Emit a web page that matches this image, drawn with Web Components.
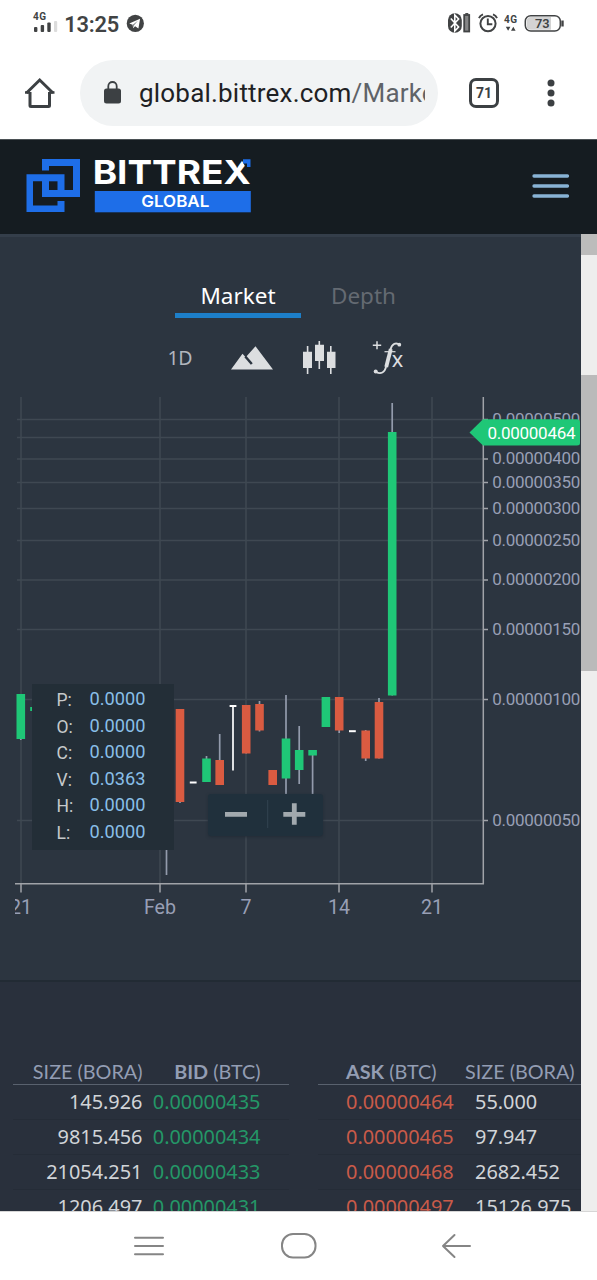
<!DOCTYPE html>
<html lang="en">
<head>
<meta charset="utf-8">
<title>Bittrex Global</title>
<style>
body {
    margin: 0;
    width: 597px;
    height: 1280px;
    overflow: hidden;
    display: flex;
    flex-direction: column;
    background: #fff;
    font-family: Roboto, "Liberation Sans", sans-serif;
}
</style>
</head>
<body>
<status-bar time="13:25" battery="73"></status-bar>
<browser-bar tabs="71"><span>global.bittrex.com</span><span slot="path">/Markets</span></browser-bar>
<site-header></site-header>
<scroll-view>
    <market-panel>
        <chart-tab active>Market</chart-tab>
        <chart-tab>Depth</chart-tab>
        <chart-tools slot="tools"></chart-tools>
        <price-chart slot="chart"></price-chart>
    </market-panel>
    <order-books>
        <order-table side="bid"></order-table>
        <order-table side="ask"></order-table>
    </order-books>
</scroll-view>
<system-nav></system-nav>

<script>
function define(name, html, setup) {
    const template = document.createElement('template');
    template.innerHTML = html;
    customElements.define(name, class extends HTMLElement {
        constructor() {
            super();
            this.attachShadow({mode: 'open'}).appendChild(template.content.cloneNode(true));
        }
        connectedCallback() {
            if (setup) setup(this, this.shadowRoot);
        }
    });
}

define('status-bar', `
<style>
:host {
    display: flex;
    justify-content: space-between;
    height: 46px;
    flex: none;
    color: #414344;
}
svg { display: block; }
text { font-family: Roboto, sans-serif; fill: #414344; }
</style>
<svg width="160" height="46">
    <text x="33" y="20" font-size="10" font-weight="700" textLength="13">4G</text>
    <g fill="#414344">
        <rect x="34" y="27" width="3.4" height="5" rx="1"/>
        <rect x="40.7" y="25" width="3.4" height="7" rx="1"/>
        <rect x="47.3" y="22.5" width="3.4" height="9.5" rx="1"/>
    </g>
    <rect x="54" y="21" width="3.2" height="11" rx="1" fill="#dcdcdc"/>
    <text id="time" x="64.3" y="31.6" font-size="21.8" font-weight="600" textLength="55"></text>
    <circle cx="135.3" cy="23.4" r="8.6" fill="#414344"/>
    <path d="M129.3 23.6l10.8-4.8-1.7 9.6-3.3-2.2-1.9 2-.6-3.5z" fill="#fff"/>
    <path d="M132.7 24.7l5.2-3.9-4 4.7-.7 2.6z" fill="#85898c"/>
</svg>
<svg width="160" height="46" viewBox="437 0 160 46">
    <rect x="448" y="13.3" width="13.8" height="19.5" rx="6.8" fill="#414344"/>
    <path d="M450.8 18.5l7.8 8.5-3.8 4V15l3.8 4-7.8 8.5" fill="none" stroke="#fff" stroke-width="1.6"/>
    <rect x="464.2" y="15" width="5" height="16.5" fill="#858687" stroke="#414344" stroke-width="1.8"/>
    <path d="M465.3 13.8h3" stroke="#414344" stroke-width="1.5"/>
    <circle cx="488" cy="23.6" r="7.6" fill="none" stroke="#414344" stroke-width="2"/>
    <path d="M487.8 18.5v5.7h4.5M479 18.2q1-2.7 4-3.8M497 18.2q-1-2.7-4-3.8" fill="none" stroke="#414344" stroke-width="1.9"/>
    <text x="504" y="23.3" font-size="10" font-weight="700" textLength="13">4G</text>
    <path d="M505.8 26.8h4.6l-2.3 4zM511 30.8h4.6l-2.3-4z" fill="#414344"/>
    <rect x="525.3" y="15.7" width="35" height="15.4" rx="5.5" fill="#fff" stroke="#414344" stroke-width="1.5"/>
    <path d="M531 17h20v12.8h-20q-4.3 0-4.3-4.3v-4.2q0-4.3 4.3-4.3z" fill="#d3d3d3"/>
    <path d="M562.5 20.5v6" stroke="#414344" stroke-width="2.4"/>
    <text id="battery" x="535" y="28" font-size="12.8" font-weight="600" textLength="14.5"></text>
</svg>
`, (el, root) => {
    root.querySelector('#time').textContent = el.getAttribute('time');
    root.querySelector('#battery').textContent = el.getAttribute('battery');
});

define('browser-bar', `
<style>
:host {
    display: flex;
    align-items: center;
    height: 93px;
    flex: none;
    color: #3c4043;
}
.home { margin-left: 24px; }
.address {
    display: flex;
    align-items: center;
    box-sizing: border-box;
    margin-left: 24px;
    width: 358px;
    height: 66px;
    padding: 0 13px 0 24px;
    border-radius: 33px;
    background: #f1f3f4;
}
.url {
    flex: 1;
    margin-left: 18px;
    overflow: hidden;
    white-space: nowrap;
    font-size: 26px;
    letter-spacing: .2px;
    line-height: 36px;
    padding-top: 1px;
    color: #202124;
}
slot[name=path] { color: #5f6368; }
.tabs {
    box-sizing: border-box;
    width: 30px;
    height: 30px;
    margin-left: 31px;
    border: 3px solid #3c4043;
    border-radius: 7px;
    text-align: center;
    font-size: 14px;
    font-weight: 700;
    line-height: 25px;
}
.menu { margin-left: 47.5px; }
svg { display: block; flex: none; }
</style>
<svg class="home" width="32" height="32" viewBox="24 77 32 32"><path d="M30 92v13.5q0 1 1 1h17.500q1 0 1-1V92M26.500 93L39.700 80 53 93" fill="none" stroke="#3c4043" stroke-width="3"/><path d="M25 92.500h5M49.500 92.500h5" stroke="#3c4043" stroke-width="2.500"/></svg>
<div class="address">
    <svg width="17" height="24" viewBox="0 0 17 24"><rect y="7.500" width="17" height="15" rx="2.500" fill="#3c4043"/><path d="M4.300 9V5.200a4.200 4.200 0 0 1 8.400 0V9" fill="none" stroke="#3c4043" stroke-width="1.800"/></svg>
    <div class="url"><slot></slot><slot name="path"></slot></div>
</div>
<div class="tabs"></div>
<svg class="menu" width="8" height="30" fill="#3c4043"><circle cx="4" cy="5" r="3.500"/><circle cx="4" cy="15" r="3.500"/><circle cx="4" cy="25" r="3.500"/></svg>
`, (el, root) => {
    root.querySelector('.tabs').textContent = el.getAttribute('tabs');
});

define('site-header', `
<style>
:host {
    display: flex;
    align-items: center;
    justify-content: space-between;
    box-sizing: border-box;
    height: 95px;
    flex: none;
    padding: 0 27px 2px 26px;
    border-top: 1px solid #4b5155;
    background: #151c21;
}
svg { display: block; }
text { font-family: Inter, "Liberation Sans", sans-serif; fill: #fff; }
</style>
<svg width="226" height="56" viewBox="26 158 226 56">
    <path d="M42 159H80V197H42V190H73V166H49V170.500H42z" fill="#1e6ee8"/>
    <path d="M26.500 174.300H64.500V197H42V181.300H33V205.500H57.500V201H64.500V212H26.500z" fill="#1e6ee8"/>
    <path d="M49 181.300h8.500v8.700H49z" fill="#151c21"/>
    <text x="92.700" y="183.500" font-size="33.300" font-weight="750" textLength="158" lengthAdjust="spacingAndGlyphs">BITTREX</text>
    <path d="M240.500 158h11.500v14.500h-3.500z" fill="#151c21"/>
    <path d="M243 159.300h7.500v7.700h-3.500v-3.500h-4z" fill="#1e6ee8"/>
    <rect x="94.800" y="191" width="156" height="21.300" fill="#1e6ee8"/>
    <text x="141.300" y="207.200" font-size="16.200" font-weight="600" textLength="68" lengthAdjust="spacingAndGlyphs">GLOBAL</text>
</svg>
<svg width="38" height="26" viewBox="0 0 38 26" stroke="#88b3d5" stroke-width="3.300" stroke-linecap="round"><path d="M2 3h33.500M2 13h33.500M2 23h33.500"/></svg>
`);

define('scroll-view', `
<style>
:host {
    display: flex;
    height: 977px;
    flex: none;
    overflow: hidden;
}
.content { width: 580.500px; flex: none; overflow: hidden; }
.track { flex: 1; background: #eeeeed; }
.corner { height: 21px; background: #bcbcbb; }
.thumb { height: 296px; margin-top: 120px; background: #bababa; }
</style>
<div class="content"><slot></slot></div>
<div class="track"><div class="corner"></div><div class="thumb"></div></div>
`);

define('market-panel', `
<style>
:host {
    display: flex;
    flex-direction: column;
    box-sizing: border-box;
    height: 748px;
    background: #2c3540;
    border-top: 3px solid #343e4a;
    border-bottom: 2px solid #222b34;
}
.tabs {
    display: flex;
    box-sizing: border-box;
    height: 81px;
    padding: 43px 0 0 175px;
}
</style>
<div class="tabs"><slot></slot></div>
<slot name="tools"></slot>
<slot name="chart"></slot>
`);

define('chart-tab', `
<style>
:host {
    display: block;
    box-sizing: border-box;
    width: 125px;
    height: 38px;
    font: 22.500px/32px "Noto Sans", "Open Sans", sans-serif;
    text-align: center;
    color: #646a72;
}
:host([active]) {
    width: 126px;
    color: #fff;
    border-bottom: 5px solid #1d7fc9;
}
</style>
<slot></slot>
`);

define('chart-tools', `
<style>
:host { display: block; height: 72px; flex: none; }
svg { display: block; }
</style>
<svg width="580" height="72" viewBox="0 318 580 72" fill="#dcdee0">
    <text x="167.500" y="365" font-family="Noto Sans" font-size="19.500" fill="#b1b6bd" textLength="25">1D</text>
    <path d="M231 369.500L242.500 353.700l3.200 3.500 9.800-11L273 369.500z"/>
    <path d="M245.300 356.500l6.500 7.500" stroke="#2c3540" stroke-width="2.500"/>
    <path d="M303 351.700h9V368h-9zM315 344.700h9V361h-9zM327 351.700h8.500V368H327zM306.800 346h1.600v28h-1.600zM318.500 341h1.600v28h-1.600zM330 346h1.600v28H330z"/>
    <path d="M372.800 345.300h8.400M377 341.200v8" fill="none" stroke="#dcdee0" stroke-width="1.500"/>
    <path d="M400 345c-4-3-8-1.500-9.500 4.500l-4.500 17.500c-1.300 5.500-5 7.500-10 5" fill="none" stroke="#dcdee0" stroke-width="1.800"/>
    <path d="M390.800 349l-4.600 18" stroke="#dcdee0" stroke-width="3.800"/>
    <circle cx="399.300" cy="344.700" r="1.900"/><circle cx="375.700" cy="371.500" r="2"/>
    <path d="M384.500 351.700h11" stroke="#dcdee0" stroke-width="1.200"/>
    <text x="391.800" y="366.500" font-family="Noto Sans" font-size="21" textLength="11.500" lengthAdjust="spacingAndGlyphs">x</text>
</svg>
`);

// y pixel of each price label, the scale is logarithmic
const prices = [
    ['0.00000500', 419.5], ['0.00000400', 459], ['0.00000350', 482.5],
    ['0.00000300', 508.5], ['0.00000250', 540.5], ['0.00000200', 580],
    ['0.00000150', 629.5], ['0.00000100', 699.5], ['0.00000050', 820.5]
];
const days = [['21', 21], ['Feb', 160], ['7', 246], ['14', 339], ['21', 432]];
// x, wick top, body top, body bottom, wick bottom, up/down/flat
const candles = [
    [20.800, 694, 694, 739, 740, 'up'],
    [34.500, 707, 707, 711, 711, 'up'],
    [166.500, 780, 800, 820, 875, 'up'],
    [180, 709, 709, 802, 803, 'down'],
    [193.200, 782, 781.500, 783.500, 782, 'flat'],
    [206.500, 756, 758.500, 782, 782, 'up'],
    [219.700, 734, 760, 785, 785, 'down'],
    [233, 706, 705, 707, 770.500, 'flat'],
    [246.200, 705, 705, 753.500, 753.500, 'down'],
    [259.500, 701, 704, 730.500, 731.500, 'down'],
    [272.700, 770, 770, 785, 785, 'down'],
    [286, 695, 738.500, 778.500, 795, 'up'],
    [299.200, 726, 750, 770, 784, 'up'],
    [312.600, 750, 750, 755.500, 795, 'up'],
    [325.900, 697, 697, 727, 727, 'up'],
    [339.200, 697, 697, 730.500, 733, 'down'],
    [352.400, 731, 730.200, 732.200, 731, 'flat'],
    [365.700, 730, 730.500, 758.500, 761, 'down'],
    [379, 698, 702, 758.500, 758.500, 'down'],
    [392.200, 403, 432, 695.500, 695.500, 'up']
];
const fills = {up: '#1fc777', down: '#da5b41', flat: '#fff'};

define('price-chart', `
<style>
:host {
    display: block;
    position: relative;
    height: 590px;
    flex: none;
}
svg { display: block; overflow: hidden; }
text { font-family: Roboto, sans-serif; }
.legend {
    position: absolute;
    left: 32px;
    top: 294px;
    box-sizing: border-box;
    width: 142px;
    height: 166px;
    padding: 2.500px 0 0 24.500px;
    display: grid;
    grid-template-columns: 33px auto;
    grid-auto-rows: 26.500px;
    align-items: center;
    font-size: 17.500px;
    background: #232e37;
    color: #c6c9cb;
}
.legend span { padding-top: 1px; }
.legend b { font-weight: 400; color: #89bfe8; padding-bottom: 2px; font-size: 18.200px; }
.zoom {
    position: absolute;
    left: 208px;
    top: 404px;
    display: flex;
    align-items: center;
    width: 115px;
    height: 42px;
    border-radius: 3px;
    background: #20303c;
    box-shadow: 0 1px 3px #222c36;
}
</style>
<svg width="580" height="590" viewBox="0 390 580 590"></svg>
<div class="legend">
    <span>P:</span><b>0.0000</b>
    <span>O:</span><b>0.0000</b>
    <span>C:</span><b>0.0000</b>
    <span>V:</span><b>0.0363</b>
    <span>H:</span><b>0.0000</b>
    <span>L:</span><b>0.0000</b>
</div>
<div class="zoom">
    <svg width="115" height="42"><path d="M17 20.300h22M75.300 20.300h22M86.300 9.300v21.500" stroke="#a2a9ae" stroke-width="4.800"/><path d="M59.700 6v28" stroke="#324350"/></svg>
</div>
`, (el, root) => {
    let out = '<g stroke="#3f4852" stroke-width="1.5">';
    [...prices.map(p => p[1]), 437.500].forEach(y => { out += `<path d="M17 ${y}H483"/>`; });
    days.forEach(([, x]) => { out += `<path d="M${x} 397V884"/>`; });
    out += '</g>';
    candles.forEach(([x, high, top, bottom, low, kind]) => {
        const wick = kind === 'flat' ? '#fff' : '#939bac';
        const half = kind === 'flat' ? 3.400 : 4.300;
        out += `<path d="M${x} ${high}V${low}" stroke="${wick}" stroke-width="1.7"/>
            <rect x="${x - half}" y="${top}" width="${half * 2}" height="${bottom - top}" fill="${fills[kind]}"/>`;
    });
    out += '<path d="M483.300 397V884M15 883.700H484" stroke="#a0a3a8" stroke-width="1.500"/>';
    prices.forEach(([label, y]) => {
        out += `<path d="M483 ${y}h5" stroke="#a0a3a8" stroke-width="1.5"/>
            <text x="492.300" y="${y + 5}" font-size="17" fill="#989fb5" textLength="88">${label}</text>`;
    });
    out += '<g font-size="19.600" fill="#989fb5" text-anchor="middle">';
    days.forEach(([label, x]) => {
        out += `<path d="M${x} 884v8.500" stroke="#a0a3a8" stroke-width="1.5"/>
            <text x="${x}" y="913.500">${label}</text>`;
    });
    // the first day label runs under the left edge of the plot
    out += `</g><path d="M0 895h15v25H0z" fill="#2c3540"/>
        <path d="M469.500 432.500L483 419.300H577q3 0 3 3V443q0 2.500-3 2.500H483z" fill="#1fc777"/>
        <text x="487.500" y="438.500" font-size="17" fill="#fff" textLength="88">0.00000464</text>`;
    root.querySelector('svg').innerHTML = out;
});

define('order-books', `
<style>
:host {
    display: flex;
    gap: 29px;
    box-sizing: border-box;
    height: 229px;
    padding: 77px 0 0 13px;
    background: #29303c;
}
</style>
<slot></slot>
`);

const orders = {
    bid: [['0.00000435', '145.926'], ['0.00000434', '9815.456'], ['0.00000433', '21054.251'], ['0.00000431', '1206.497']],
    ask: [['0.00000464', '55.000'], ['0.00000465', '97.947'], ['0.00000468', '2682.452'], ['0.00000497', '15126.975']]
};

define('order-table', `
<style>
:host {
    display: block;
    flex: none;
    width: 276px;
    font: 19.900px/34px "Noto Sans", "Open Sans", sans-serif;
    color: #d1d4d8;
}
.row {
    display: grid;
    box-sizing: border-box;
    height: 35px;
    border-bottom: 1px solid #252c37;
    white-space: nowrap;
}
.head {
    height: 26px;
    border-color: #59616e;
    font: 19.800px/24px Lato, "Liberation Sans", sans-serif;
    color: #939db3;
}
:host([side=bid]) .row { grid-template-columns: 129.500px 118px; text-align: right; }
:host([side=ask]) .row { grid-template-columns: 129px auto; padding-left: 28px; }
:host([side=ask]) .head { grid-template-columns: 119px auto; }
:host([side=bid]) .price { color: #249767; }
:host([side=ask]) .price { color: #c95b49; }
</style>
`, (el, root) => {
    const side = el.getAttribute('side');
    const row = (cls, price, size) => {
        const cells = [`<span>${size}</span>`, `<span class="${cls ? '' : 'price'}">${price}</span>`];
        if (side === 'ask') cells.reverse();
        return `<div class="row ${cls}">${cells.join('')}</div>`;
    };
    root.innerHTML += row('head', `<b>${side.toUpperCase()}</b> (BTC)`, 'SIZE (BORA)')
        + orders[side].map(([price, size]) => row('', price, size)).join('');
});

define('system-nav', `
<style>
:host {
    display: flex;
    align-items: center;
    gap: 117px;
    box-sizing: border-box;
    height: 69px;
    flex: none;
    padding: 0 0 1px 134px;
    background: #fff;
    border-top: 1px solid #d6d6d6;
}
svg { display: block; fill: none; stroke: #858585; stroke-width: 2; stroke-linecap: round; stroke-linejoin: round; }
</style>
<svg width="30" height="26"><path d="M1 4.700h28M1 13h28M1 21.300h28"/></svg>
<svg width="36" height="26"><rect x="1" y="1" width="33.500" height="23.500" rx="11"/></svg>
<svg width="44" height="26"><path d="M9 13h27M20.500 2L9 13l11.500 11"/></svg>
`);
</script>
</body>
</html>
